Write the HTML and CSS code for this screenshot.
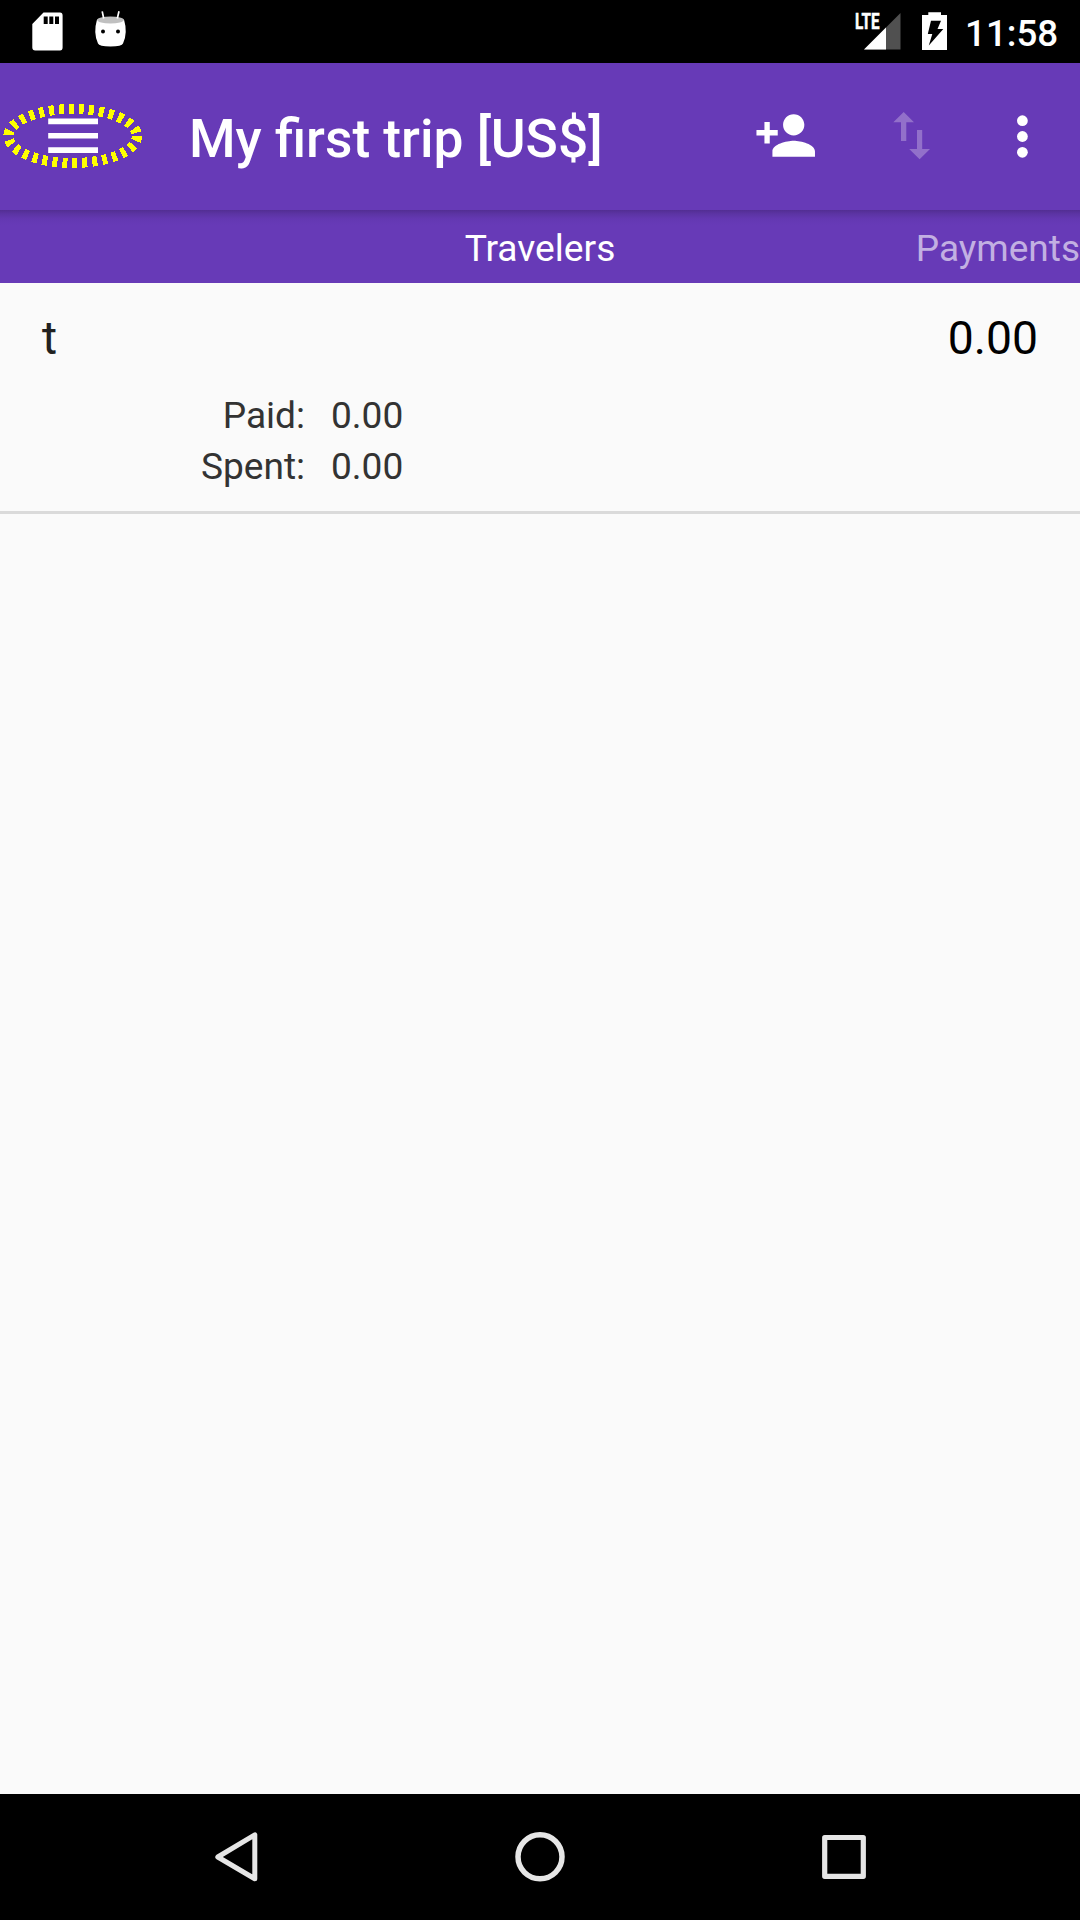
FILE: index.html
```html
<!DOCTYPE html>
<html lang="en">
<head>
<meta charset="utf-8">
<title>My first trip</title>
<link rel="stylesheet" href="styles.css">
</head>
<body>
<div class="screen">
  <div class="status-bar">
    <svg class="status-left" width="140" height="63" viewBox="0 0 140 63">
      <path fill="#fff" fill-rule="evenodd" d="M43.500 12.500H60Q62.600 12.500 62.600 15.500V47.500Q62.600 50.500 60 50.500H35.300Q32.300 50.500 32.300 47.500V24ZM43.700 16.500V24H47.700V16.500ZM49.300 16.500V24H53.300V16.500ZM55 16.500V24H59V16.500Z"/>
      <path fill="#fff" d="M97 19.500Q93 33 98 43.500Q99 46.300 110.500 46.500Q122 46.300 123 43.500Q128 33 124 19.500Z"/>
      <ellipse cx="110.500" cy="20" rx="13.300" ry="3.400" fill="#c0c0c0"/>
      <path stroke="#fff" stroke-width="1.700" fill="none" d="M102.200 11.300L103.700 18.500M119 11.300L117.300 18.500"/>
      <circle cx="103" cy="31.500" r="2"/><circle cx="118" cy="31.500" r="2"/>
    </svg>
    <svg class="signal" width="46" height="63" viewBox="0 0 46 63">
      <path d="M9 49.500L45.500 13V49.500Z" fill="#505050"/>
      <path d="M9 49.500L31 27.500V49.500Z" fill="#fff"/>
      <text class="lte" x="0" y="29" textLength="24.500" lengthAdjust="spacingAndGlyphs">LTE</text>
    </svg>
    <svg class="battery" width="26" height="63" viewBox="0 0 26 63">
      <path fill="#fff" d="M6.300 12.300H19V15H25V50H0V15H6.300Z"/>
      <path d="M9 20.700H19L15.500 29H21.300L6.800 45.500L10.300 34H5.800Z"/>
    </svg>
    <span class="clock">11:58</span>
  </div>

  <header class="toolbar">
    <div class="menu">
      <svg width="147" height="147" viewBox="0 63 147 147">
        <path fill="#fff" d="M48.200 118.600H98V124.300H48.200ZM48.200 132.900H98V138.600H48.200ZM48.200 147.200H98V152.900H48.200Z"/>
        <ellipse class="highlight" cx="72.700" cy="136" rx="64.300" ry="27"/>
      </svg>
    </div>
    <h1 class="title">My first trip [US$]</h1>
    <svg class="actions" width="340" height="147" viewBox="740 63 340 147">
      <g transform="translate(753.800 103.500) scale(2.660)">
        <path fill="#fff" d="M15 12c2.210 0 4-1.790 4-4s-1.790-4-4-4-4 1.790-4 4 1.790 4 4 4zm-9-2V7H4v3H1v2h3v3h2v-3h3v-2H6zm9 4c-2.670 0-8 1.340-8 4v2h16v-2c0-2.660-5.330-4-8-4z"/>
      </g>
      <path fill="#9270ca" d="M903.700 112L914 122.300H906.300V141H901V122.300H893.300ZM917 130H922.200V149H930L919.600 159.300L909.200 149H917Z"/>
      <g fill="#fff"><circle cx="1022.400" cy="120.700" r="5.400"/><circle cx="1022.400" cy="136.500" r="5.400"/><circle cx="1022.400" cy="152.300" r="5.400"/></g>
    </svg>
  </header>

  <nav class="tabs">
    <span></span>
    <span class="tab">Travelers</span>
    <span class="tab tab-next">Payments</span>
  </nav>

  <main class="content">
    <section class="traveler">
      <div class="traveler-head">
        <span class="name">t</span>
        <span class="balance">0.00</span>
      </div>
      <dl class="totals">
        <dt>Paid:</dt><dd>0.00</dd>
        <dt>Spent:</dt><dd>0.00</dd>
      </dl>
    </section>
  </main>

  <footer class="nav-bar">
    <svg width="1080" height="126" viewBox="0 1794 1080 126" fill="none" stroke="#e6e6e6" stroke-linejoin="round">
      <path stroke-width="5" d="M254.800 1834.800V1878.800L217.800 1857Z"/>
      <circle cx="540" cy="1856.800" r="22" stroke-width="5.500"/>
      <rect x="824.700" y="1837.500" width="38.600" height="38.800" stroke-width="5.200"/>
    </svg>
  </footer>
</div>
</body>
</html>
```

FILE: styles.css
```css
body {
  margin: 0;
  font-family: Roboto, sans-serif;
}

svg {
  display: block;
  flex: none;
}

.screen {
  width: 1080px;
  height: 1920px;
  display: flex;
  flex-direction: column;
  overflow: hidden;
  background: #fafafa;
}

.status-bar {
  height: 63px;
  flex: none;
  display: flex;
  background: #000;
  color: #fff;
}

.signal {
  margin-left: 715px;
}

.battery {
  margin-left: 21px;
}

.lte {
  fill: #fff;
  stroke: #fff;
  stroke-width: 0.5px;
  font-size: 21.5px;
  font-weight: 700;
}

.clock {
  margin-left: 17px;
  padding-top: 2px;
  font-size: 36.75px;
  font-weight: 500;
  line-height: 64px;
}

.toolbar {
  height: 147px;
  flex: none;
  display: flex;
  background: #673ab7;
  color: #fff;
}

.menu {
  width: 189px;
}

.highlight {
  fill: none;
  stroke: #ff0;
  stroke-width: 10;
  stroke-dasharray: 5 5;
  shape-rendering: crispEdges;
}

.title {
  width: 551px;
  margin: 0;
  font-size: 53.3px;
  font-weight: 500;
  line-height: 152px;
  white-space: nowrap;
}

.tabs {
  height: 73px;
  flex: none;
  display: grid;
  grid-template-columns: 1fr auto 1fr;
  background: linear-gradient(#522e92, #5c34a4 4px, #6438b2 9px, #673ab7 15px);
  color: #fff;
  font-size: 37.2px;
  line-height: 76px;
}

.tab-next {
  justify-self: end;
  color: #c2b0e2;
  font-size: 37px;
  line-height: 78px;
}

.content {
  flex: 1;
}

.traveler {
  height: 228px;
  border-bottom: 3px solid #dadada;
}

.traveler-head {
  display: flex;
  justify-content: space-between;
  padding: 28px 42px 0 42px;
  font-size: 46.3px;
  line-height: 55px;
}

.name {
  color: #212121;
}

.balance {
  color: #000;
}

.totals {
  display: grid;
  grid-template-columns: 305px auto;
  column-gap: 26px;
  margin: 24px 0 0;
  color: #333;
  font-size: 37.1px;
  line-height: 51px;
}

.totals dt {
  text-align: right;
}

.totals dd {
  margin: 0;
}

.nav-bar {
  height: 126px;
  flex: none;
  background: #000;
}
```
